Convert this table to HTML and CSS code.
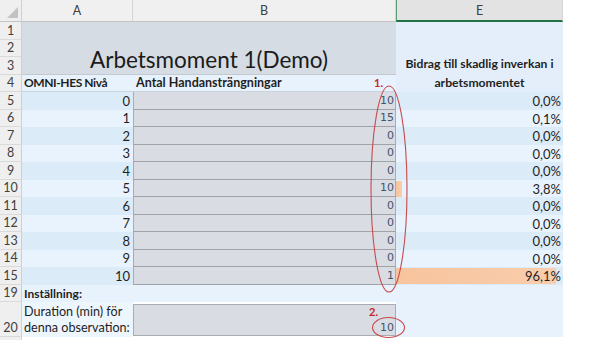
FILE: index.html
```html
<!DOCTYPE html>
<html lang="sv">
  <head>
    <meta charset="UTF-8" />
    <meta name="viewport" content="width=device-width, initial-scale=1.0" />
    <title>Arbetsmoment 1(Demo)</title>
    <link rel="stylesheet" href="styles.css">
  </head>
  <body>
    <div class="view">
      <div class="sheet">
        <!-- column headers -->
        <div class="corner"></div>
        <div class="colhead">A</div>
        <div class="colhead">B</div>
        <div class="colhead sel">E</div>

        <!-- rows 1-4: title and headings -->
        <div class="rowhead">1</div>
        <div class="title">Arbetsmoment 1(Demo)</div>
        <div class="ehead">Bidrag till skadlig inverkan i<br>arbetsmomentet</div>
        <div class="rowhead">2</div>
        <div class="rowhead">3</div>
        <div class="rowhead">4</div>
        <div class="cell label tight">OMNI-HES Nivå</div>
        <div class="cell label">Antal Handansträngningar</div>

        <!-- rows 5-15: one row per level -->
        <div class="row alt">
          <div class="rowhead">5</div>
          <div class="cell lvl">0</div>
          <div class="cell cnt">10</div>
          <div class="pct"><div class="bar" style="width: 0%"></div><span class="val">0,0%</span></div>
        </div>
        <div class="row">
          <div class="rowhead">6</div>
          <div class="cell lvl">1</div>
          <div class="cell cnt">15</div>
          <div class="pct"><div class="bar" style="width: 0.1%"></div><span class="val">0,1%</span></div>
        </div>
        <div class="row alt">
          <div class="rowhead">7</div>
          <div class="cell lvl">2</div>
          <div class="cell cnt">0</div>
          <div class="pct"><div class="bar" style="width: 0%"></div><span class="val">0,0%</span></div>
        </div>
        <div class="row">
          <div class="rowhead">8</div>
          <div class="cell lvl">3</div>
          <div class="cell cnt">0</div>
          <div class="pct"><div class="bar" style="width: 0%"></div><span class="val">0,0%</span></div>
        </div>
        <div class="row alt">
          <div class="rowhead">9</div>
          <div class="cell lvl">4</div>
          <div class="cell cnt">0</div>
          <div class="pct"><div class="bar" style="width: 0%"></div><span class="val">0,0%</span></div>
        </div>
        <div class="row">
          <div class="rowhead">10</div>
          <div class="cell lvl">5</div>
          <div class="cell cnt">10</div>
          <div class="pct"><div class="bar" style="width: 3.8%"></div><span class="val">3,8%</span></div>
        </div>
        <div class="row alt">
          <div class="rowhead">11</div>
          <div class="cell lvl">6</div>
          <div class="cell cnt">0</div>
          <div class="pct"><div class="bar" style="width: 0%"></div><span class="val">0,0%</span></div>
        </div>
        <div class="row">
          <div class="rowhead">12</div>
          <div class="cell lvl">7</div>
          <div class="cell cnt">0</div>
          <div class="pct"><div class="bar" style="width: 0%"></div><span class="val">0,0%</span></div>
        </div>
        <div class="row alt">
          <div class="rowhead">13</div>
          <div class="cell lvl">8</div>
          <div class="cell cnt">0</div>
          <div class="pct"><div class="bar" style="width: 0%"></div><span class="val">0,0%</span></div>
        </div>
        <div class="row">
          <div class="rowhead">14</div>
          <div class="cell lvl">9</div>
          <div class="cell cnt">0</div>
          <div class="pct"><div class="bar" style="width: 0%"></div><span class="val">0,0%</span></div>
        </div>
        <div class="row alt">
          <div class="rowhead">15</div>
          <div class="cell lvl">10</div>
          <div class="cell cnt">1</div>
          <div class="pct"><div class="bar" style="width: 96.1%"></div><span class="val">96,1%</span></div>
        </div>

        <!-- rows 19-20: settings -->
        <div class="rowhead">19</div>
        <div class="cell setting">Inställning:</div>
        <div class="cell blank"></div>
        <div class="cell blank"></div>

        <div class="rowhead tall">20</div>
        <div class="cell note">Duration (min) för<br>denna observation:</div>
        <div class="cell input">10</div>
        <div class="cell blank"></div>

        <div class="rowhead"></div>
        <div class="cell empty"></div>
        <div class="cell empty"></div>
        <div class="cell empty"></div>
      </div>

      <!-- red hand-drawn markings -->
      <svg class="marks" width="605" height="340" viewBox="0 0 605 340">
        <ellipse cx="389" cy="189" rx="18" ry="103" />
        <text x="374" y="87">1.</text>
        <ellipse cx="388.5" cy="327.5" rx="16" ry="10" />
        <text x="369" y="316">2.</text>
      </svg>
    </div>
  </body>
</html>
```

FILE: styles.css
```css
*,
*::before,
*::after {
  box-sizing: border-box;
  margin: 0;
  padding: 0;
}

body {
  background-color: #ffffff;
  width: 605px;
  height: 340px;
  overflow: hidden;
  font-family: Lato, "Open Sans", sans-serif;
  color: #1f1f1f;
}

.view {
  position: relative;
  width: 605px;
  height: 340px;
  overflow: hidden;
}

.sheet {
  display: grid;
  width: 563px;
  grid-template-columns: 22px 111px 263px 167px;
  grid-template-rows: 22px repeat(16, 17.5px) 35px 17.5px;
}

.row {
  display: contents;
}

/* headers */
.corner {
  background-color: #efefef;
  border-right: 1px solid #d0d0d0;
  border-bottom: 1px solid #c4c4c4;
  display: flex;
  align-items: flex-end;
  justify-content: flex-end;
  padding: 0 3px 3px 0;
}

.corner::after {
  content: "";
  width: 0;
  height: 0;
  border-left: 11px solid transparent;
  border-bottom: 11px solid #c2c2c2;
}

.colhead {
  background-color: #f0f0f0;
  border-right: 1px solid #d4d4d4;
  border-bottom: 1px solid #c4c4c4;
  display: flex;
  align-items: center;
  justify-content: center;
  font-size: 12.5px;
  color: #404040;
}

.colhead.sel {
  background-color: #e3e3e3;
  border-left: 1px solid #5a9c74;
  border-bottom: 2px solid #217346;
}

.rowhead {
  background-color: #efefef;
  border-right: 1px solid #cfcfcf;
  border-bottom: 1px solid #dadada;
  display: flex;
  align-items: center;
  justify-content: center;
  font-size: 12.5px;
  color: #404040;
}

.rowhead.tall {
  align-items: flex-end;
  padding-bottom: 1px;
}

/* title block */
.title {
  grid-column: span 2;
  grid-row: span 3;
  background-color: #d6dce4;
  border-bottom: 1px solid #c3c9d1;
  display: flex;
  align-items: flex-end;
  justify-content: center;
  padding-bottom: 1px;
  font-size: 22.5px;
  color: #1b1b1b;
}

.ehead {
  grid-row: span 4;
  background-color: #e3eefa;
  display: flex;
  flex-direction: column;
  justify-content: flex-end;
  text-align: center;
  font-size: 12.2px;
  font-weight: bold;
  line-height: 19px;
}

/* cells */
.cell {
  display: flex;
  align-items: center;
  padding: 0 3px;
  font-size: 13px;
  white-space: nowrap;
}

.label {
  background-color: #e8f2fc;
  border-bottom: 1px solid #c9d3de;
  font-weight: bold;
  font-size: 12.5px;
}

.label.tight {
  padding-left: 2px;
  font-size: 12px;
  letter-spacing: -0.4px;
}

.lvl {
  justify-content: flex-end;
  background-color: #e9f3fd;
}

.cnt {
  justify-content: flex-end;
  background-color: #d9dce2;
  border-left: 1px solid #a9acb1;
  border-right: 1px solid #a9acb1;
  border-bottom: 1px solid #9fa2a7;
  padding-right: 1px;
  font-family: "DejaVu Sans", sans-serif;
  font-size: 11px;
  color: #44546a;
}

.pct {
  display: grid;
  background-color: #e9f3fd;
  padding: 1px 0 1px 0;
  font-size: 13px;
}

.row.alt .lvl,
.row.alt .pct {
  background-color: #dcebf8;
}

.bar {
  grid-area: 1 / 1;
  height: 100%;
  background: linear-gradient(90deg, #f7c49d, #f9cdad);
}

.val {
  grid-area: 1 / 1;
  justify-self: end;
  align-self: center;
  padding-right: 2px;
}

.setting {
  background-color: #e8f2fc;
  padding-left: 2px;
  font-weight: bold;
  font-size: 12px;
}

.blank {
  background-color: #e8f2fc;
}

.note {
  background-color: #edf5fd;
  align-items: flex-end;
  line-height: 16px;
  padding: 0 2px 1px 2px;
  font-size: 12.6px;
}

.input {
  background-color: #d9dce2;
  border: 1px solid #a9acb1;
  margin: 2px 0 1px 0;
  justify-content: flex-end;
  align-items: flex-end;
  padding: 0 1px 1px 0;
  font-family: "DejaVu Sans", sans-serif;
  font-size: 11px;
  color: #44546a;
}

.empty {
  background-color: #ffffff;
}

/* markings drawn on top of the sheet */
.marks {
  position: absolute;
  top: 0;
  left: 0;
  pointer-events: none;
}

.marks ellipse {
  fill: none;
  stroke: #c84a4d;
  stroke-width: 1.1;
}

.marks text {
  font-family: Lato, "Open Sans", sans-serif;
  font-size: 11px;
  font-weight: bold;
  fill: #c8262c;
}
```
